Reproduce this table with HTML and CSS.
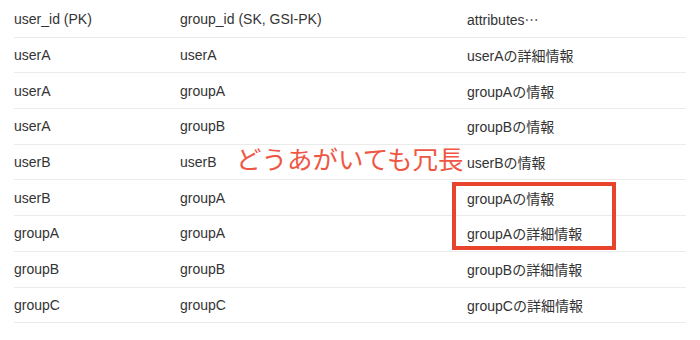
FILE: index.html
```html
<!DOCTYPE html>
<html lang="ja">
<head>
<meta charset="utf-8">
<link rel="stylesheet" href="styles.css">
</head>
<body>
<div class="page">
  <div class="table">
    <div class="row"><span>user_id (PK)</span><span>group_id (SK, GSI-PK)</span><span>attributes<span class="ell">…</span></span></div>
    <div class="row"><span>userA</span><span>userA</span><span>userAの詳細情報</span></div>
    <div class="row"><span>userA</span><span>groupA</span><span>groupAの情報</span></div>
    <div class="row"><span>userA</span><span>groupB</span><span>groupBの情報</span></div>
    <div class="row"><span>userB</span><span>userB</span><span>userBの情報</span></div>
    <div class="row"><span>userB</span><span>groupA</span><span>groupAの情報</span></div>
    <div class="row"><span>groupA</span><span>groupA</span><span>groupAの詳細情報</span></div>
    <div class="row"><span>groupB</span><span>groupB</span><span>groupBの詳細情報</span></div>
    <div class="row"><span>groupC</span><span>groupC</span><span>groupCの詳細情報</span></div>
  </div>
  <div class="note">どうあがいても冗長</div>
  <div class="highlight"></div>
</div>
</body>
</html>
```
FILE: styles.css
```css
html, body {
  margin: 0;
  padding: 0;
  background: #ffffff;
}
.page {
  position: relative;
  width: 700px;
  height: 340px;
  padding: 2px 14px 0 14px;
  box-sizing: border-box;
  font-family: "Liberation Sans", "Noto Sans CJK JP", sans-serif;
  font-size: 14px;
  color: #333333;
}
.table {
  display: flex;
  flex-direction: column;
}
.row {
  display: grid;
  grid-template-columns: 166px 287px 1fr;
  align-items: center;
  height: 35.7px;
  box-sizing: border-box;
  border-bottom: 1px solid #ebebeb;
}
.ell {
  font-family: "Noto Sans CJK JP", sans-serif;
}
.note {
  position: absolute;
  left: 236px;
  top: 144px;
  font-family: "Noto Sans CJK JP", sans-serif;
  font-size: 25.5px;
  line-height: 28px;
  color: #ef5643;
  white-space: nowrap;
}
.highlight {
  position: absolute;
  left: 452px;
  top: 182px;
  width: 164px;
  height: 68px;
  box-sizing: border-box;
  border: 4px solid #e8432d;
}
```
